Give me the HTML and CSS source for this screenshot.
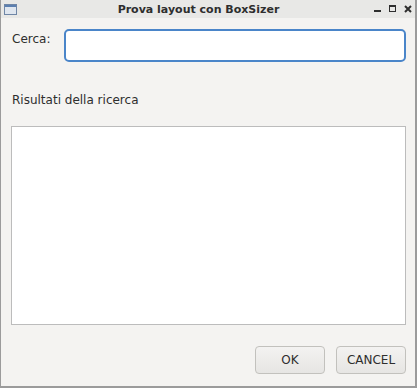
FILE: index.html
```html
<!DOCTYPE html>
<html>
<head>
  <meta charset="UTF-8" />
  <title>Prova layout con BoxSizer</title>
  <link rel="stylesheet" href="styles.css">
</head>
<body>
  <div class="window">
    <div class="titlebar">
      <svg class="appicon" width="13" height="11" viewBox="0 0 13 11">
        <rect x="0.5" y="0.5" width="12" height="10" fill="#dfe6ef" stroke="#6f86a6"/>
        <rect x="1" y="1" width="11" height="2" fill="#5b7fb0"/>
      </svg>
      <span class="title">Prova layout con BoxSizer</span>
      <div class="controls">
        <svg width="8" height="8" viewBox="0 0 8 8"><rect x="0" y="5" width="7" height="2" fill="#2e2e2e"/></svg>
        <svg width="8" height="8" viewBox="0 0 8 8"><rect x="0.5" y="0.5" width="6" height="6" fill="none" stroke="#2e2e2e"/><rect x="0" y="0" width="7" height="2" fill="#2e2e2e"/></svg>
        <svg width="8" height="8" viewBox="0 0 8 8"><path d="M1 1 L7 7 M7 1 L1 7" stroke="#2e2e2e" stroke-width="2"/></svg>
      </div>
    </div>
    <div class="content">
      <div class="searchrow">
        <label class="lbl" for="cerca">Cerca:</label>
        <input id="cerca" class="search" type="text" />
      </div>
      <div class="lbl results">Risultati della ricerca</div>
      <div class="listbox"></div>
      <div class="buttons">
        <button class="btn">OK</button>
        <button class="btn">CANCEL</button>
      </div>
    </div>
  </div>
</body>
</html>
```
FILE: styles.css
```css
html, body { margin: 0; padding: 0; }
body { font-family: "DejaVu Sans", sans-serif; background: #f4f3f1; }
.window {
  width: 417px; height: 388px; box-sizing: border-box;
  border: 1px solid #9b9b9b; border-top: none;
  border-right-width: 2px; border-bottom-width: 2px;
  background: #f4f3f1;
  display: flex; flex-direction: column;
}
.titlebar {
  height: 18px; background: #e8e8e6;
  display: flex; align-items: center;
  padding: 0 3px 0 3px;
}
.appicon { flex: none; }
.title {
  flex: 1; text-align: center;
  font-weight: bold; font-size: 11px; color: #2e2e2e;
  padding-left: 6px;
}
.controls { display: flex; gap: 7px; align-items: center; }
.controls svg { display: block; }
.content { flex: 1; padding: 11px 9px 0 10px; display: flex; flex-direction: column; }
.searchrow { display: flex; align-items: flex-start; }
.lbl { font-size: 12px; color: #2e2e2e; }
.searchrow .lbl { flex: none; width: 53px; box-sizing: border-box; padding: 3px 0 0 1px; }
.search {
  flex: 1; height: 33px; box-sizing: border-box; margin: 0;
  border: 2px solid #4a85c9; border-radius: 5px; background: #fff;
  outline: none;
}
.results { margin: 31px 0 0 1px; height: 20px; }
.listbox {
  height: 199px; margin: 13px 0 0 0;
  background: #fff; border: 1px solid #bcbcbc; box-sizing: border-box;
}
.buttons { display: flex; justify-content: flex-end; gap: 11px; margin-top: 21px; }
.btn {
  width: 70px; height: 28px; margin: 0;
  border: 1px solid #c2c1bd; border-radius: 4px;
  background: linear-gradient(#f3f2f1, #e6e5e3);
  font-family: "DejaVu Sans", sans-serif; font-size: 12px; color: #2e2e2e;
}
```
